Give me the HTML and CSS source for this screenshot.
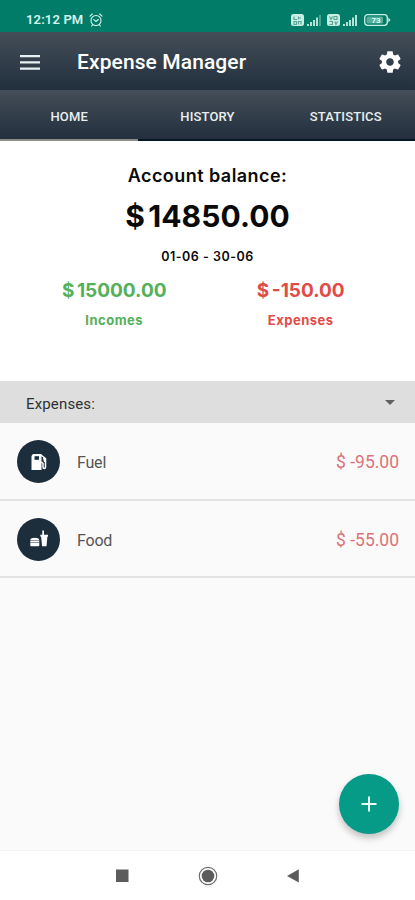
FILE: index.html
```html
<!DOCTYPE html>
<html lang="en">
<head>
<meta charset="utf-8">
<meta name="viewport" content="width=device-width, initial-scale=1">
<title>Expense Manager</title>
<link rel="stylesheet" href="styles.css">
</head>
<body>
<div class="phone">
  <div class="status">
    <span class="clock">12:12 PM</span>
    <svg class="alarm" width="14" height="14" viewBox="0 0 14 14" fill="none" stroke="currentColor" stroke-width="1.1" stroke-linecap="round"><circle cx="7" cy="7.5" r="5"/><path d="M1 3.2 3.3 1M13 3.2 10.7 1M4.8 6.6 7 8.5l2.3-2M3.6 11.8l-1 1.2M10.4 11.8l1 1.2"/></svg>
    <svg class="signals" width="101" height="14" viewBox="0 0 101 14">
      <g fill="#c9eee3"><rect x="1" y="1" width="13" height="12" rx="2.5"/><rect x="37" y="1" width="13" height="12" rx="2.5"/></g>
      <g stroke="#5aa797" stroke-width="1.2" fill="none"><path d="M4 3.5v3h3M8.5 3.5v3M8.5 5h2.500M4 8.500h2.500v3H4zM8.500 11.500v-3h2.500v3"/><path d="M39.500 3.500l1.500 3 1.500-3M44 6.500v-3h3v3zM39.500 8.500h3v3h-3M45 8.500l1 3 1.500-3"/></g>
      <g fill="#b5e2d7"><path d="M17 11h2v2h-2zM20 9h2v4h-2zM23 7h2v6h-2zM53 11h2v2h-2zM56 9h2v4h-2zM59 7h2v6h-2zM62 4.500h2V13h-2zM65 2h2v11h-2z"/><path d="M26 4.500h2V13h-2z"/><path opacity=".4" d="M29 2h2v11h-2z"/></g>
      <rect x="74.700" y="1.700" width="22.600" height="10.600" rx="3" fill="none" stroke="#c9eee3" stroke-width="1.300"/>
      <rect x="76.500" y="3.500" width="16.500" height="7" rx="1.500" fill="#58ad9b"/>
      <path d="M98.300 4.500 100.500 7 98.300 9.500z" fill="#c9eee3"/>
      <text x="86" y="10" text-anchor="middle" class="charge">73</text>
    </svg>
  </div>
  <header class="appbar">
    <svg class="menu" width="20" height="15" viewBox="0 0 20 15" fill="currentColor"><path d="M0 0h20v2.300H0zM0 6.200h20v2.300H0zM0 12.400h20v2.300H0z"/></svg>
    <h1>Expense Manager</h1>
    <svg class="gear" width="26" height="26" viewBox="0 0 24 24" fill="currentColor"><path d="M19.430 12.980c.04-.32.07-.64.07-.98s-.03-.66-.07-.98l2.110-1.650c.19-.15.24-.42.12-.64l-2-3.460c-.12-.22-.39-.3-.61-.22l-2.490 1c-.52-.4-1.080-.73-1.690-.98l-.38-2.650C14.460 2.180 14.250 2 14 2h-4c-.25 0-.46.18-.49.42l-.38 2.650c-.61.25-1.170.59-1.690.98l-2.490-1c-.23-.09-.49 0-.61.22l-2 3.460c-.13.22-.07.49.12.64l2.110 1.650c-.04.32-.07.65-.07.98s.03.66.07.98l-2.110 1.650c-.19.15-.24.42-.12.64l2 3.460c.12.22.39.3.61.22l2.490-1c.52.4 1.080.73 1.690.98l.38 2.650c.03.24.24.42.49.42h4c.25 0 .46-.18.49-.42l.38-2.650c.61-.25 1.170-.59 1.690-.98l2.490 1c.23.09.49 0 .61-.22l2-3.460c.12-.22.07-.49-.12-.64l-2.110-1.650zM12 15.500c-1.930 0-3.500-1.570-3.500-3.500s1.570-3.500 3.500-3.500 3.500 1.570 3.500 3.500-1.570 3.500-3.500 3.500z"/></svg>
  </header>
  <nav class="tabs"><span class="tab active">HOME</span><span class="tab">HISTORY</span><span class="tab">STATISTICS</span></nav>
  <section class="summary">
    <div class="label">Account balance:</div>
    <div class="balance">$ 14850.00</div>
    <div class="period">01-06 - 30-06</div>
    <div class="totals">
      <div class="total income"><div class="amount">$ 15000.00</div><div class="caption">Incomes</div></div>
      <div class="total expense"><div class="amount">$ -150.00</div><div class="caption">Expenses</div></div>
    </div>
  </section>
  <div class="picker"><span>Expenses:</span><i class="caret"></i></div>
  <main class="list">
    <div class="row">
      <span class="badge"><svg width="18" height="18" viewBox="0 0 18 18"><path fill="#fff" d="M3 1h8.500v16H1.500V3z"/><path fill="#1c2d3c" d="M4.500 3.200h4.500v3.600H4.500z"/><path d="M11 2l4.500 3.500v8.500c0 2-2.500 2-2.500 0v-3.500L11.500 9" fill="none" stroke="#fff" stroke-width="1.500"/><path fill="#fff" d="M13 5h3v4h-2z"/></svg></span>
      <span class="name">Fuel</span><span class="value">$ -95.00</span>
    </div>
    <div class="row">
      <span class="badge"><svg width="18" height="18" viewBox="0 0 18 18" fill="#fff"><path d="M.3 10c0-3 9-3 9 0zM.3 10.600h9v1.600h-9zM.3 12.800h9v2.400q0 1-1 1h-7q-1 0-1-1zM10.300 4.800h2V.5h1.700v4.300h4v1.700h-.6l-.9 9.700h-4.400l-1-9.700h-.8z"/></svg></span>
      <span class="name">Food</span><span class="value">$ -55.00</span>
    </div>
    <div class="fab"><svg width="16" height="16" viewBox="0 0 16 16"><path d="M8 .5v15M.5 8h15" stroke="#e6fff8" stroke-width="2"/></svg></div>
  </main>
  <footer class="navbar">
    <svg width="190" height="22" viewBox="0 0 190 22" fill="#5c5c5c"><path d="M4 4.500h12.500V17H4z"/><circle cx="96" cy="11" r="6.300"/><circle cx="96" cy="11" r="8.700" fill="none" stroke="#6e6e6e" stroke-width="1.200"/><path d="M186.800 4.200v13.400L175 11z"/></svg>
  </footer>
</div>
</body>
</html>
```
FILE: styles.css
```css
* { box-sizing: border-box; }
body { margin: 0; font-family: Roboto, "Liberation Sans", sans-serif; }
.phone { width: 415px; height: 900px; display: flex; flex-direction: column; overflow: hidden; background: #fafafa; }
.status { height: 32px; flex: none; display: flex; align-items: center; padding: 7px 24px 0 26px; background: #017c69; color: #d5f4ec; }
.clock { font-size: 13px; font-weight: 600; line-height: 16px; letter-spacing: .15px; }
.alarm { margin-left: 6px; }
.signals { margin-left: auto; }
.charge { font-size: 8px; font-weight: 700; fill: #d9fff5; }
.appbar { height: 58px; flex: none; display: flex; align-items: center; padding: 2px 12px 0 20px; color: #fff; background: linear-gradient(#434e58, #222f3d); }
.menu { color: #e6f0f2; }
.appbar h1 { margin: 0 0 0 37px; font-size: 21px; font-weight: 500; line-height: 26px; letter-spacing: .1px; }
.gear { margin-left: auto; }
.tabs { height: 51px; flex: none; display: grid; grid-template-columns: repeat(3, 1fr); background: linear-gradient(#434e58, #25313f 46px); }
.tab { display: flex; align-items: center; justify-content: center; padding-top: 4px; border-bottom: 2px solid #071827; font-size: 13px; font-weight: 500; letter-spacing: .15px; color: #e9eef0; }
.tab.active { border-bottom-color: #8a8c88; }
.summary { height: 240px; flex: none; padding-top: 22px; background: #fff; text-align: center; font-family: Inter, "Liberation Sans", sans-serif; font-weight: 700; color: #0a0a0a; }
.label { font-size: 18px; line-height: 26px; font-weight: 600; letter-spacing: .45px; }
.balance { margin-top: 7px; font-size: 30px; line-height: 40px; font-weight: 700; word-spacing: -4px; letter-spacing: .1px; }
.period { margin-top: 12px; font-size: 12.5px; line-height: 18px; font-weight: 600; letter-spacing: .5px; }
.totals { display: grid; grid-template-columns: 1fr 1fr; padding: 0 21px; margin-top: 13px; }
.amount { font-size: 19px; line-height: 24px; word-spacing: -2px; }
.caption { margin-top: 8px; font-size: 13px; line-height: 18px; letter-spacing: .5px; }
.income { color: #55b05a; }
.expense { color: #e04b48; }
.picker { height: 42px; flex: none; display: flex; align-items: center; justify-content: space-between; padding: 3px 20px 0 26px; background: #dedede; font-size: 15px; letter-spacing: .15px; color: #303030; }
.caret { border: 5px solid transparent; border-top-color: #606060; border-bottom: 0; margin-bottom: 2px; }
.list { flex: 1; position: relative; background: #fafafa; }
.row { height: 77.5px; display: flex; align-items: center; padding: 2px 17px 0; border-bottom: 2px solid #e2e2e2; }
.badge { width: 43px; height: 43px; border-radius: 50%; background: #1c2d3c; display: flex; align-items: center; justify-content: center; }
.name { margin: 2px 0 0 17px; font-size: 16px; letter-spacing: -.2px; color: #555; }
.value { margin: 1px -1px 0 auto; font-size: 17.5px; color: #dc7379; }
.fab { position: absolute; right: 16px; bottom: 16px; width: 60px; height: 60px; border-radius: 50%; background: #059b86; display: flex; align-items: center; justify-content: center; box-shadow: 0 4px 7px rgba(0,0,0,.24); }
.navbar { height: 50px; flex: none; display: flex; align-items: center; justify-content: center; background: #fff; border-top: 1px solid #f3f3f3; padding-right: 2px; }
```
